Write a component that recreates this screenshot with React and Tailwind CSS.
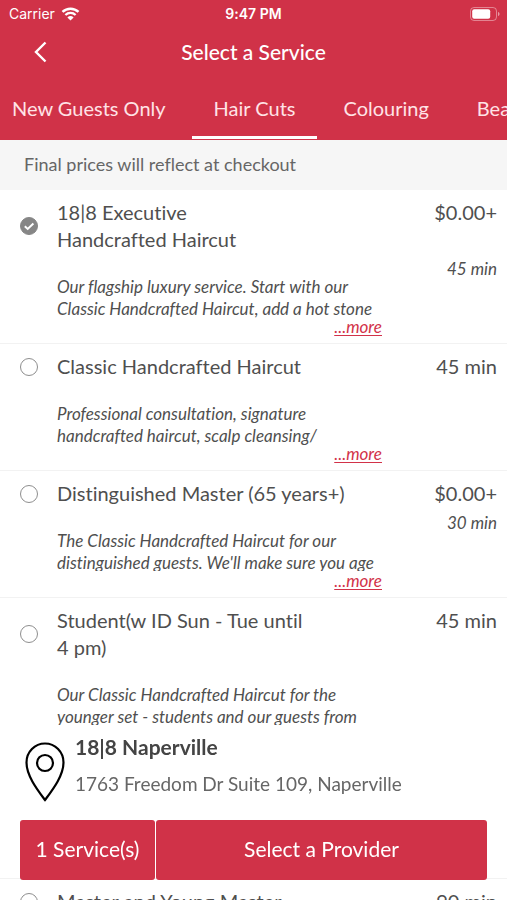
import { useState } from 'react';

const TABS = ['New Guests Only', 'Hair Cuts', 'Colouring', 'Beard'];

const SERVICES = [
  {
    id: 1,
    title: '18|8 Executive\nHandcrafted Haircut',
    price: '$0.00+',
    duration: '45 min',
    description: 'Our flagship luxury service. Start with our\nClassic Handcrafted Haircut, add a hot stone',
  },
  {
    id: 2,
    title: 'Classic Handcrafted Haircut',
    price: '45 min',
    description: 'Professional consultation, signature\nhandcrafted haircut, scalp cleansing/',
  },
  {
    id: 3,
    title: 'Distinguished Master (65 years+)',
    price: '$0.00+',
    duration: '30 min',
    description: "The Classic Handcrafted Haircut for our\ndistinguished guests. We'll make sure you age",
    clipped: true,
  },
  {
    id: 4,
    title: 'Student(w ID Sun - Tue until\n4 pm)',
    price: '45 min',
    description: 'Our Classic Handcrafted Haircut for the\nyounger set - students and our guests from',
    clipped: true,
  },
];

const LAST_SERVICE = { id: 6, title: 'Master and Young Master', price: '90 min' };

function StatusBar() {
  return (
    <div className="relative flex h-7 items-center justify-between pr-[7px] pl-[9px] font-['Inter',sans-serif] text-sm">
      <div className="flex items-center gap-[6px]">
        <span>Carrier</span>
        <svg width="19" height="14" viewBox="0 0 18 14" fill="none" aria-hidden="true">
          <path d="M1 4.900a11.600 11.600 0 0 1 16 0" stroke="currentColor" strokeWidth="2.500" />
          <path d="M3.900 8a7.400 7.400 0 0 1 10.200 0" stroke="currentColor" strokeWidth="2.300" />
          <path d="M9 13.600 5.900 10.400a4.600 4.600 0 0 1 6.200 0z" fill="currentColor" />
        </svg>
      </div>
      <span className="absolute inset-x-0 text-center font-semibold">9:47 PM</span>
      <svg width="30" height="14" viewBox="0 0 30 14" fill="none" aria-hidden="true">
        <rect x="0.5" y="0.5" width="26" height="13" rx="3.5" stroke="#fff" strokeOpacity="0.4" />
        <rect x="2.2" y="2.2" width="18" height="9.6" rx="2" fill="#fff" />
        <path d="M28 5v4c1-.3 1.500-1.100 1.500-2S29 5.300 28 5z" fill="#fff" fillOpacity="0.5" />
      </svg>
    </div>
  );
}

function ServiceRow({ service, checked, onToggle }) {
  const inputId = `service-${service.id}`;

  return (
    <li className="border-b border-[#f2f2f2] pt-[9px] pr-[10px] pb-[6px] pl-5">
      <div className="flex items-center">
        <span className="relative mr-[19px] h-[18px] w-[18px] shrink-0">
          <input
            id={inputId}
            type="checkbox"
            checked={checked}
            onChange={onToggle}
            className="block h-full w-full appearance-none rounded-full border border-[#8e8e8e] checked:border-[#868686] checked:bg-[#868686]"
          />
          {checked && (
            <svg className="pointer-events-none absolute inset-0" viewBox="0 0 18 18" fill="none" aria-hidden="true">
              <path d="m4.800 9.200 2.900 2.700 5.700-5.400" stroke="#fff" strokeWidth="2" />
            </svg>
          )}
        </span>
        <label htmlFor={inputId} className="flex-1 text-xl leading-[27px] whitespace-pre-line">
          {service.title}
        </label>
        <span className="self-start text-xl leading-[27px]">{service.price}</span>
      </div>
      {service.description && (
        <div className="flex items-start justify-between pl-[37px] text-[17px] leading-[22px] italic">
          <div className="mt-[23px] w-[325px]">
            <p className={`h-[41px] whitespace-pre ${service.clipped ? 'overflow-hidden' : ''}`}>
              {service.description}
            </p>
            <button type="button" className="ml-auto block h-5 leading-5 text-[#d23249] italic underline underline-offset-2">
              ...more
            </button>
          </div>
          {service.duration && <span className="mt-[5px]">{service.duration}</span>}
        </div>
      )}
    </li>
  );
}

export default function App() {
  const [selected, setSelected] = useState([1]);
  const [activeTab, setActiveTab] = useState('Hair Cuts');

  const toggle = (id) => {
    setSelected((prev) => (prev.includes(id) ? prev.filter((s) => s !== id) : [...prev, id]));
  };

  return (
    <div className="relative h-screen overflow-hidden bg-white font-['Lato',sans-serif] text-[#4f4f4f] [font-variant-ligatures:none]">
      <header className="bg-[#d03248] text-white">
        <StatusBar />
        <div className="relative flex h-12 items-center px-8">
          <button type="button" aria-label="Back" className="relative z-10">
            <svg width="16" height="22" viewBox="0 0 16 22" fill="none">
              <path d="M13.500 1.500 4 11l9.500 9.500" stroke="currentColor" strokeWidth="2.400" />
            </svg>
          </button>
          <h1 className="absolute inset-x-0 text-center text-[21px] leading-7 font-medium">Select a Service</h1>
        </div>
        <nav className="-ml-[10px] flex h-16 gap-1 overflow-hidden whitespace-nowrap">
          {TABS.map((tab) => (
            <button
              key={tab}
              type="button"
              onClick={() => setActiveTab(tab)}
              className={`mb-[1px] shrink-0 border-b-[3px] px-[22px] pt-1 text-xl ${
                activeTab === tab ? 'border-white' : 'border-transparent'
              } text-[#ffe3e6]`}
            >
              {tab}
            </button>
          ))}
        </nav>
      </header>

      <p className="bg-[#f6f6f6] px-6 pt-[11px] pb-3 text-lg leading-[27px] text-[#666]">Final prices will reflect at checkout</p>

      <ul>
        {SERVICES.map((service) => (
          <ServiceRow
            key={service.id}
            service={service}
            checked={selected.includes(service.id)}
            onToggle={() => toggle(service.id)}
          />
        ))}
        <li className="h-[127px] border-b border-[#f2f2f2]" />
        <ServiceRow
          service={LAST_SERVICE}
          checked={selected.includes(LAST_SERVICE.id)}
          onToggle={() => toggle(LAST_SERVICE.id)}
        />
      </ul>

      {/* location + booking actions, pinned over the list */}
      <div className="fixed inset-x-0 bottom-5">
        <div className="flex h-[95px] bg-white pl-6">
          <svg className="mt-4 mr-[9px] shrink-0" width="42" height="62" viewBox="0 0 42 62" fill="none" aria-hidden="true">
            <path
              d="M21 59C14 49.500 2.500 35 2.500 21.500a18.500 19 0 0 1 37 0C39.500 35 28 49.500 21 59z"
              stroke="#000"
              strokeWidth="2.200"
            />
            <circle cx="21" cy="22" r="8" stroke="#000" strokeWidth="2.200" />
          </svg>
          <div className="pt-2">
            <h2 className="text-[21px] leading-7 font-bold text-[#444]">18|8 Naperville</h2>
            <p className="mt-[9px] text-[19px] leading-7 text-[#666]">1763 Freedom Dr Suite 109, Naperville</p>
          </div>
        </div>
        <div className="flex h-[60px] gap-[1px] px-5 text-[21px] text-white">
          <button type="button" className="w-[135px] rounded-[3px] bg-[#d03248] pb-[2px]">
            {selected.length} Service(s)
          </button>
          <button type="button" className="flex-1 rounded-[3px] bg-[#d03248] pb-[2px]">
            Select a Provider
          </button>
        </div>
      </div>
    </div>
  );
}
